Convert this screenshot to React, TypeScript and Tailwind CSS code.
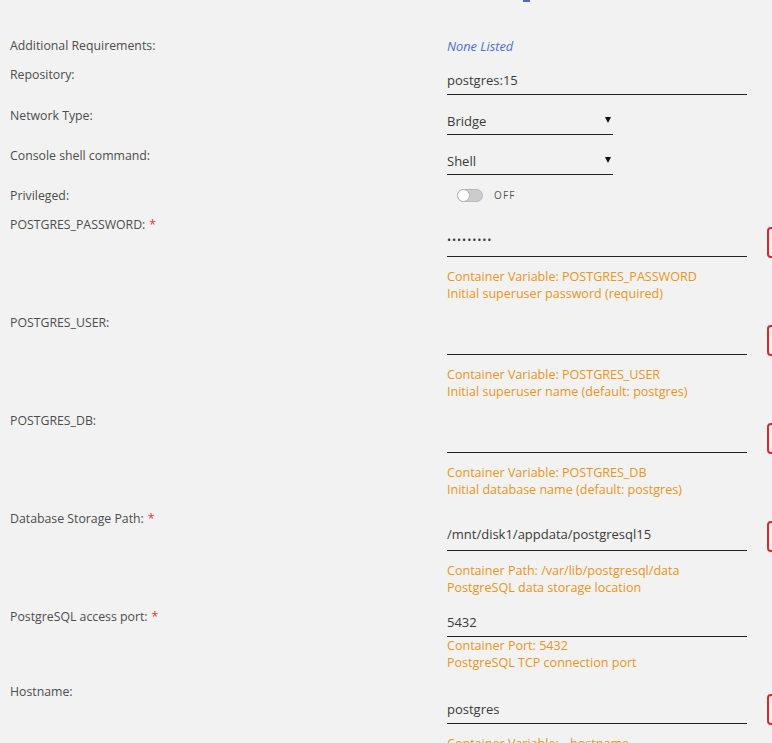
import React from "react";

type EnvField = {
  label: string;
  required?: boolean;
  value: string;
  lines: string[];
  compact?: boolean;
  pt?: string;
  pb?: string;
  masked?: boolean;
};

const fields: EnvField[] = [
  {
    label: "POSTGRES_PASSWORD:",
    required: true,
    value: "•••••••••",
    masked: true,
    lines: ["Container Variable: POSTGRES_PASSWORD", "Initial superuser password (required)"],
  },
  {
    label: "POSTGRES_USER:",
    value: "",
    lines: ["Container Variable: POSTGRES_USER", "Initial superuser name (default: postgres)"],
  },
  {
    label: "POSTGRES_DB:",
    value: "",
    lines: ["Container Variable: POSTGRES_DB", "Initial database name (default: postgres)"],
  },
  {
    label: "Database Storage Path:",
    required: true,
    value: "/mnt/disk1/appdata/postgresql15",
    lines: ["Container Path: /var/lib/postgresql/data", "PostgreSQL data storage location"],
  },
  {
    label: "PostgreSQL access port:",
    required: true,
    value: "5432",
    lines: ["Container Port: 5432", "PostgreSQL TCP connection port"],
    compact: true,
  },
  {
    label: "Hostname:",
    value: "postgres",
    lines: ["Container Variable: --hostname", "Container hostname"],
    pt: "pt-[16px]",
    pb: "pb-[5px]",
  },
];

function Label({ text, required }: { text: string; required?: boolean }) {
  return (
    <div className="w-[447px] shrink-0 pl-[10px] text-[12.3px] leading-[16px] text-[#4d4d4d]">
      {text}
      {required && <span className="ml-[4px] text-[#e53535]">*</span>}
    </div>
  );
}

function SelectBox({ value }: { value: string }) {
  return (
    <div className="relative w-[166px] border-b border-[#222] pt-[4px] pb-[4px] text-[13px] leading-[18px] text-[#3a3a3a]">
      {value}
      <span className="absolute right-[2px] top-[9px] h-0 w-0 border-x-[3px] border-t-[6px] border-x-transparent border-t-[#111]" />
    </div>
  );
}

function RemoveBox() {
  return (
    <div className="ml-[20px] mt-[10px] h-[31px] w-[40px] shrink-0 rounded-[4px] border-2 border-[#e0262c]" />
  );
}

function EnvBlock({ f }: { f: EnvField }) {
  const pt = f.pt ?? (f.compact ? "pt-[4px]" : "pt-[14px]");
  const pb = f.pb ?? (f.compact ? "pb-[5px]" : "pb-[7px]");
  return (
    <div className="flex items-start pb-[13px]">
      <Label text={f.label} required={f.required} />
      <div className="w-[300px] shrink-0">
        <div
          className={`border-b border-[#222] ${pt} ${pb} leading-[18px] text-[#3a3a3a] ${
            f.masked ? "text-[11px] tracking-[0.9px]" : "text-[13px]"
          }`}
        >
          {f.value || "\u00a0"}
        </div>
        <div
          className={`${f.compact ? "mt-0" : "mt-[11px]"} text-[12.55px] leading-[17px] text-[#e8951c]`}
        >
          {f.lines.map((l) => (
            <div key={l} className="whitespace-nowrap">
              {l}
            </div>
          ))}
        </div>
      </div>
      {!f.compact && <RemoveBox />}
    </div>
  );
}

export default function App() {
  return (
    <div className="relative h-[743px] overflow-hidden bg-[#f2f2f2] font-['Open_Sans',sans-serif]">
      {/* link underline peeking from the section above */}
      <div className="absolute left-[523px] top-0 h-[2px] w-[7px] bg-[#4a6cc0]" />

      <div className="pt-[38px]">
        <div className="flex h-[29px] items-start">
          <Label text="Additional Requirements:" />
          <div className="text-[12.8px] italic leading-[16px] text-[#4a70c8]">None Listed</div>
        </div>

        <div className="flex h-[41px] items-start">
          <Label text="Repository:" />
          <div className="w-[300px] border-b border-[#222] pt-[4px] pb-[5px] text-[13px] leading-[18px] text-[#3a3a3a]">
            postgres:15
          </div>
        </div>

        <div className="flex h-[40px] items-start">
          <Label text="Network Type:" />
          <SelectBox value="Bridge" />
        </div>

        <div className="flex h-[40px] items-start">
          <Label text="Console shell command:" />
          <SelectBox value="Shell" />
        </div>

        <div className="flex h-[29px] items-start">
          <Label text="Privileged:" />
          <div className="flex items-center pl-[10px]">
            <div className="relative h-[13px] w-[26px] rounded-full border border-[#b8b8b8] bg-[#cccccc]">
              <div className="absolute -left-px -top-px h-[13px] w-[13px] rounded-full border border-[#b0b0b0] bg-white" />
            </div>
            <span className="ml-[11px] text-[10px] tracking-[1.2px] text-[#555]">OFF</span>
          </div>
        </div>

        {fields.map((f) => (
          <EnvBlock key={f.label} f={f} />
        ))}
      </div>
    </div>
  );
}
